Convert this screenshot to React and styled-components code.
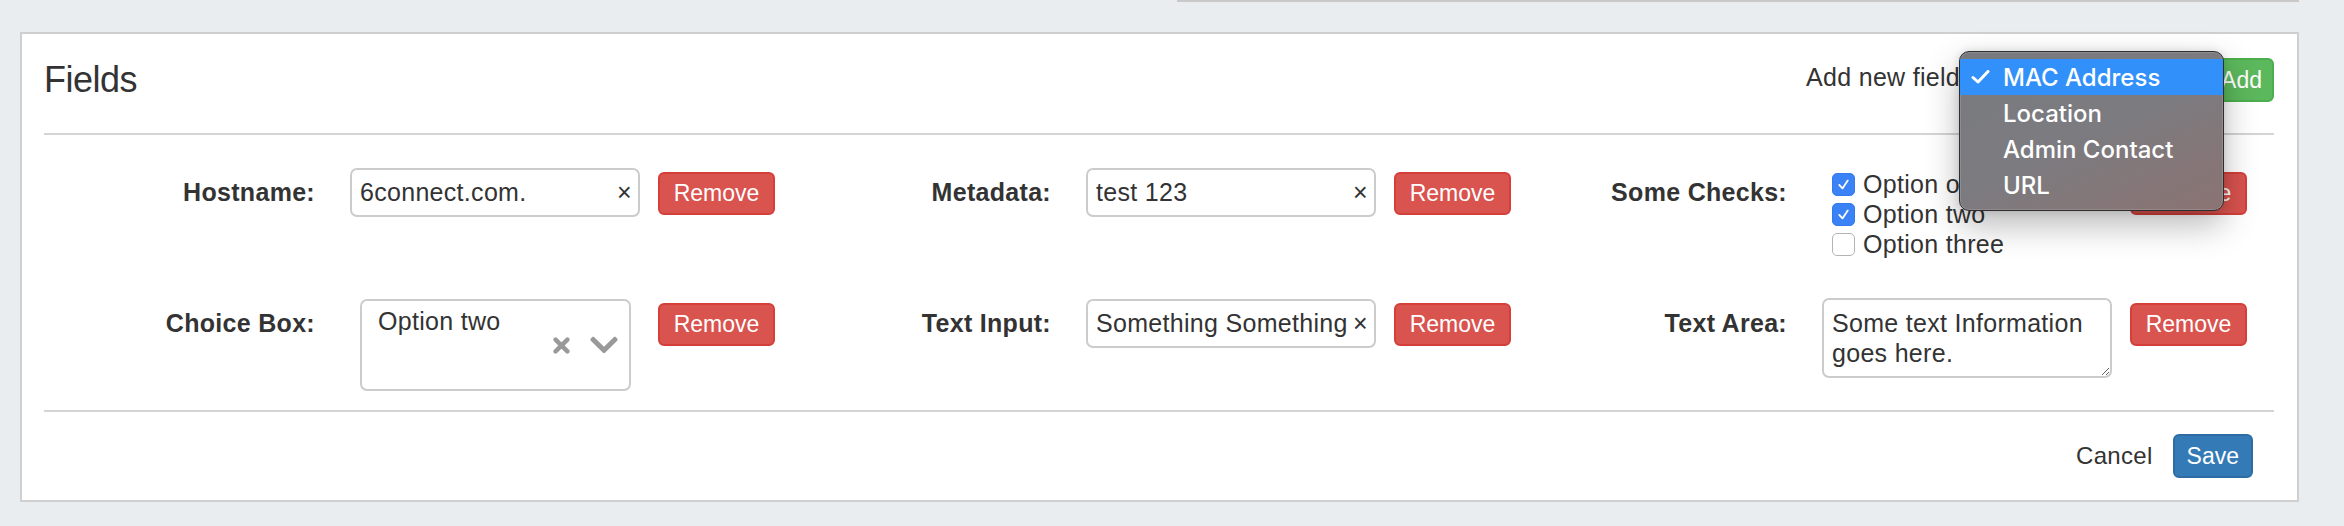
import React from 'react';
import styled, { createGlobalStyle } from 'styled-components';
import { FaChevronDown } from 'react-icons/fa';

const GlobalStyle = createGlobalStyle`
  html, body { margin: 0; padding: 0; background: #e9edf0; }
  body {
    font-family: "Liberation Sans", Arial, Helvetica, sans-serif;
    color: #333;
    width: 2344px;
    height: 526px;
    overflow: hidden;
  }
  * { box-sizing: border-box; }
`;

const Page = styled.div`
  width: 2344px;
  height: 526px;
  padding: 0 45px 0 20px;
`;

const PrevEdge = styled.div`
  margin-left: 1157px;
  width: 1122px;
  border-bottom: 2px solid #c9c9c9;
`;

const Panel = styled.section`
  margin-top: 30px;
  width: 100%;
  background: #fff;
  border: 2px solid #cfcfcf;
  padding: 0 23px 0 22px;
`;

const Header = styled.header`
  display: flex;
  align-items: center;
  justify-content: space-between;
  padding: 24px 0 31px;
  border-bottom: 2px solid #d4d4d4;
`;

const Title = styled.h3`
  margin: 0;
  font-size: 36px;
  font-weight: 400;
  line-height: 44px;
  letter-spacing: -0.5px;
  color: #333;
`;

const HeaderRight = styled.div`
  position: relative;
  display: flex;
  align-items: center;
  height: 44px;
`;

const AddLabel = styled.span`
  font-size: 25px;
  letter-spacing: 0.3px;
  line-height: 30px;
  margin-bottom: 6px;
`;

const SelectBox = styled.div`
  width: 235px;
  height: 36px;
  margin: 0 10px 0 4px;
  border: 2px solid #ccc;
  border-radius: 6px;
  background: #fff;
`;

const Btn = styled.button`
  height: ${p => p.$h || 44}px;
  padding: 0 ${p => p.$px || 12}px;
  border-radius: 6px;
  border: 2px solid ${p => p.$border};
  background: ${p => p.$bg};
  color: #fff;
  font-family: inherit;
  font-size: 23px;
  line-height: 1;
  cursor: pointer;
`;

const Menu = styled.div`
  position: absolute;
  top: -7px;
  right: 50px;
  width: 265px;
  padding: 7px 0;
  border: 1px solid #2e2e2e;
  border-radius: 10px;
  background: linear-gradient(155deg, #797a7f 0%, #7b7b80 50%, #857677 80%, #8b7373 100%);
  box-shadow: inset 0 0 0 1px rgba(255, 255, 255, 0.14), 0 14px 34px rgba(0, 0, 0, 0.28), 0 0 8px rgba(0, 0, 0, 0.12);
  font-family: Inter, "Liberation Sans", sans-serif;
  z-index: 10;
  overflow: hidden;
`;

const MenuItem = styled.div`
  display: flex;
  align-items: center;
  height: 36px;
  padding-left: 11px;
  color: #fff;
  font-size: 24px;
  font-weight: 500;
  background: ${p => (p.$selected ? '#3290fa' : 'transparent')};
`;

const CheckSlot = styled.span`
  width: 32px;
  display: flex;
  align-items: center;
`;

const Body = styled.div`
  padding: 33px 0 19px;
`;

const FieldsGrid = styled.div`
  display: grid;
  grid-template-columns: repeat(3, 731px);
  column-gap: 5px;
  row-gap: 40px;
  align-items: start;
`;

const FieldGroup = styled.div`
  display: grid;
  grid-template-columns: 288px 290px 117px;
  column-gap: 18px;
  align-items: start;
`;

const FieldLabel = styled.label`
  padding-right: 17px;
  text-align: right;
  font-weight: 700;
  font-size: 25px;
  letter-spacing: 0.3px;
  line-height: 49px;
  white-space: nowrap;
`;

const InputBox = styled.div`
  display: flex;
  align-items: center;
  height: 49px;
  border: 2px solid #cccccc;
  border-radius: 7px;
  padding: 0 6px 0 8px;
  font-size: 25px;
  letter-spacing: 0.3px;
  background: #fff;
`;

const InputText = styled.span`
  flex: 1;
  min-width: 0;
  overflow: hidden;
  white-space: nowrap;
`;

const ClearX = styled.span`
  flex: none;
  font-size: 25px;
  color: #333;
  margin-left: 2px;
`;

const RemoveBtn = styled(Btn)`
  margin-top: 4px;
  height: 43px;
  width: 117px;
  padding: 0;
`;

const ChoiceBox = styled.div`
  margin: 0 9px 0 10px;
  height: 92px;
  border: 2px solid #ccc;
  border-radius: 7px;
  display: flex;
  align-items: center;
  padding: 0 9px 0 16px;
  background: #fff;
`;

const ChoiceValue = styled.span`
  align-self: flex-start;
  margin-top: 5px;
  flex: 1;
  font-size: 25px;
  letter-spacing: 0.3px;
  line-height: 30px;
`;

const ChoiceIcons = styled.span`
  display: flex;
  align-items: center;
  gap: 18px;
  color: #999;
`;

const CheckList = styled.div`
  padding: 1px 0 0 10px;
  display: flex;
  flex-direction: column;
`;

const CheckRow = styled.label`
  display: flex;
  align-items: center;
  gap: 8px;
  height: 30px;
  font-size: 25px;
  letter-spacing: 0.3px;
  white-space: nowrap;
`;

const CheckBox = styled.span`
  width: 23px;
  height: 23px;
  border-radius: 5px;
  flex: none;
  display: flex;
  align-items: center;
  justify-content: center;
  background: ${p => (p.$checked ? '#3b82f6' : '#fff')};
  border: ${p => (p.$checked ? '1px solid #3479ef' : '1.5px solid #b4b4b4')};
`;

const TextArea = styled.textarea`
  display: block;
  width: 290px;
  height: 80px;
  margin-top: -1px;
  border: 2px solid #ccc;
  border-radius: 7px;
  padding: 8px;
  font-family: inherit;
  font-size: 25px;
  letter-spacing: 0.3px;
  line-height: 30px;
  color: #333;
  overflow: hidden;
  resize: both;
  outline: none;
`;

const Footer = styled.footer`
  border-top: 2px solid #d4d4d4;
  padding: 22px 21px 22px 0;
  display: flex;
  justify-content: flex-end;
  align-items: center;
  gap: 20px;
`;

const CancelLink = styled.button`
  background: none;
  border: none;
  padding: 0;
  font-family: inherit;
  font-size: 24px;
  letter-spacing: 0.3px;
  color: #333;
  cursor: pointer;
`;

const MenuCheck = () => (
  <svg width="19" height="14" viewBox="0 0 19 14">
    <path d="M2 7.5 L7 12 L17 1.5" fill="none" stroke="#fff" strokeWidth="3" strokeLinecap="round" strokeLinejoin="round" />
  </svg>
);

const BoxCheck = () => (
  <svg width="17" height="17" viewBox="0 0 24 24">
    <path d="M6 12.5 L10.5 17.5 L18 6.5" fill="none" stroke="#fff" strokeWidth="2.6" strokeLinecap="round" strokeLinejoin="round" />
  </svg>
);

const ClearIcon = () => (
  <svg width="17" height="17" viewBox="0 0 17 17">
    <path d="M2.6 2.6 L14.4 14.4 M14.4 2.6 L2.6 14.4" fill="none" stroke="currentColor" strokeWidth="4.4" strokeLinecap="round" />
  </svg>
);

const Remove = () => (
  <RemoveBtn $bg="#d9534f" $border="#d43f3a">Remove</RemoveBtn>
);

const TextField = ({ label, value }) => (
  <FieldGroup>
    <FieldLabel>{label}</FieldLabel>
    <InputBox>
      <InputText>{value}</InputText>
      <ClearX>×</ClearX>
    </InputBox>
    <Remove />
  </FieldGroup>
);

const checks = [
  { label: 'Option one', checked: true },
  { label: 'Option two', checked: true },
  { label: 'Option three', checked: false },
];

const menuItems = ['MAC Address', 'Location', 'Admin Contact', 'URL'];

export default function App() {
  return (
    <>
      <GlobalStyle />
      <Page>
        <PrevEdge />
        <Panel>
          <Header>
            <Title>Fields</Title>
            <HeaderRight>
              <AddLabel>Add new field</AddLabel>
              <SelectBox />
              <Btn $bg="#5cb85c" $border="#4cae4c" $px={10}>Add</Btn>
              <Menu>
                {menuItems.map((m, i) => (
                  <MenuItem key={m} $selected={i === 0}>
                    <CheckSlot>{i === 0 && <MenuCheck />}</CheckSlot>
                    {m}
                  </MenuItem>
                ))}
              </Menu>
            </HeaderRight>
          </Header>
          <Body>
            <FieldsGrid>
              <TextField label="Hostname:" value="6connect.com." />
              <TextField label="Metadata:" value="test 123" />
              <FieldGroup>
                <FieldLabel>Some Checks:</FieldLabel>
                <CheckList>
                  {checks.map(c => (
                    <CheckRow key={c.label}>
                      <CheckBox $checked={c.checked}>{c.checked && <BoxCheck />}</CheckBox>
                      {c.label}
                    </CheckRow>
                  ))}
                </CheckList>
                <Remove />
              </FieldGroup>

              <FieldGroup>
                <FieldLabel>Choice Box:</FieldLabel>
                <ChoiceBox>
                  <ChoiceValue>Option two</ChoiceValue>
                  <ChoiceIcons>
                    <ClearIcon />
                    <FaChevronDown size={32} />
                  </ChoiceIcons>
                </ChoiceBox>
                <Remove />
              </FieldGroup>
              <TextField label="Text Input:" value="Something Something" />
              <FieldGroup>
                <FieldLabel>Text Area:</FieldLabel>
                <TextArea readOnly defaultValue="Some text Information goes here." />
                <Remove />
              </FieldGroup>
            </FieldsGrid>
          </Body>
          <Footer>
            <CancelLink>Cancel</CancelLink>
            <Btn $bg="#337ab7" $border="#2e6da4" $px={12}>Save</Btn>
          </Footer>
        </Panel>
      </Page>
    </>
  );
}
